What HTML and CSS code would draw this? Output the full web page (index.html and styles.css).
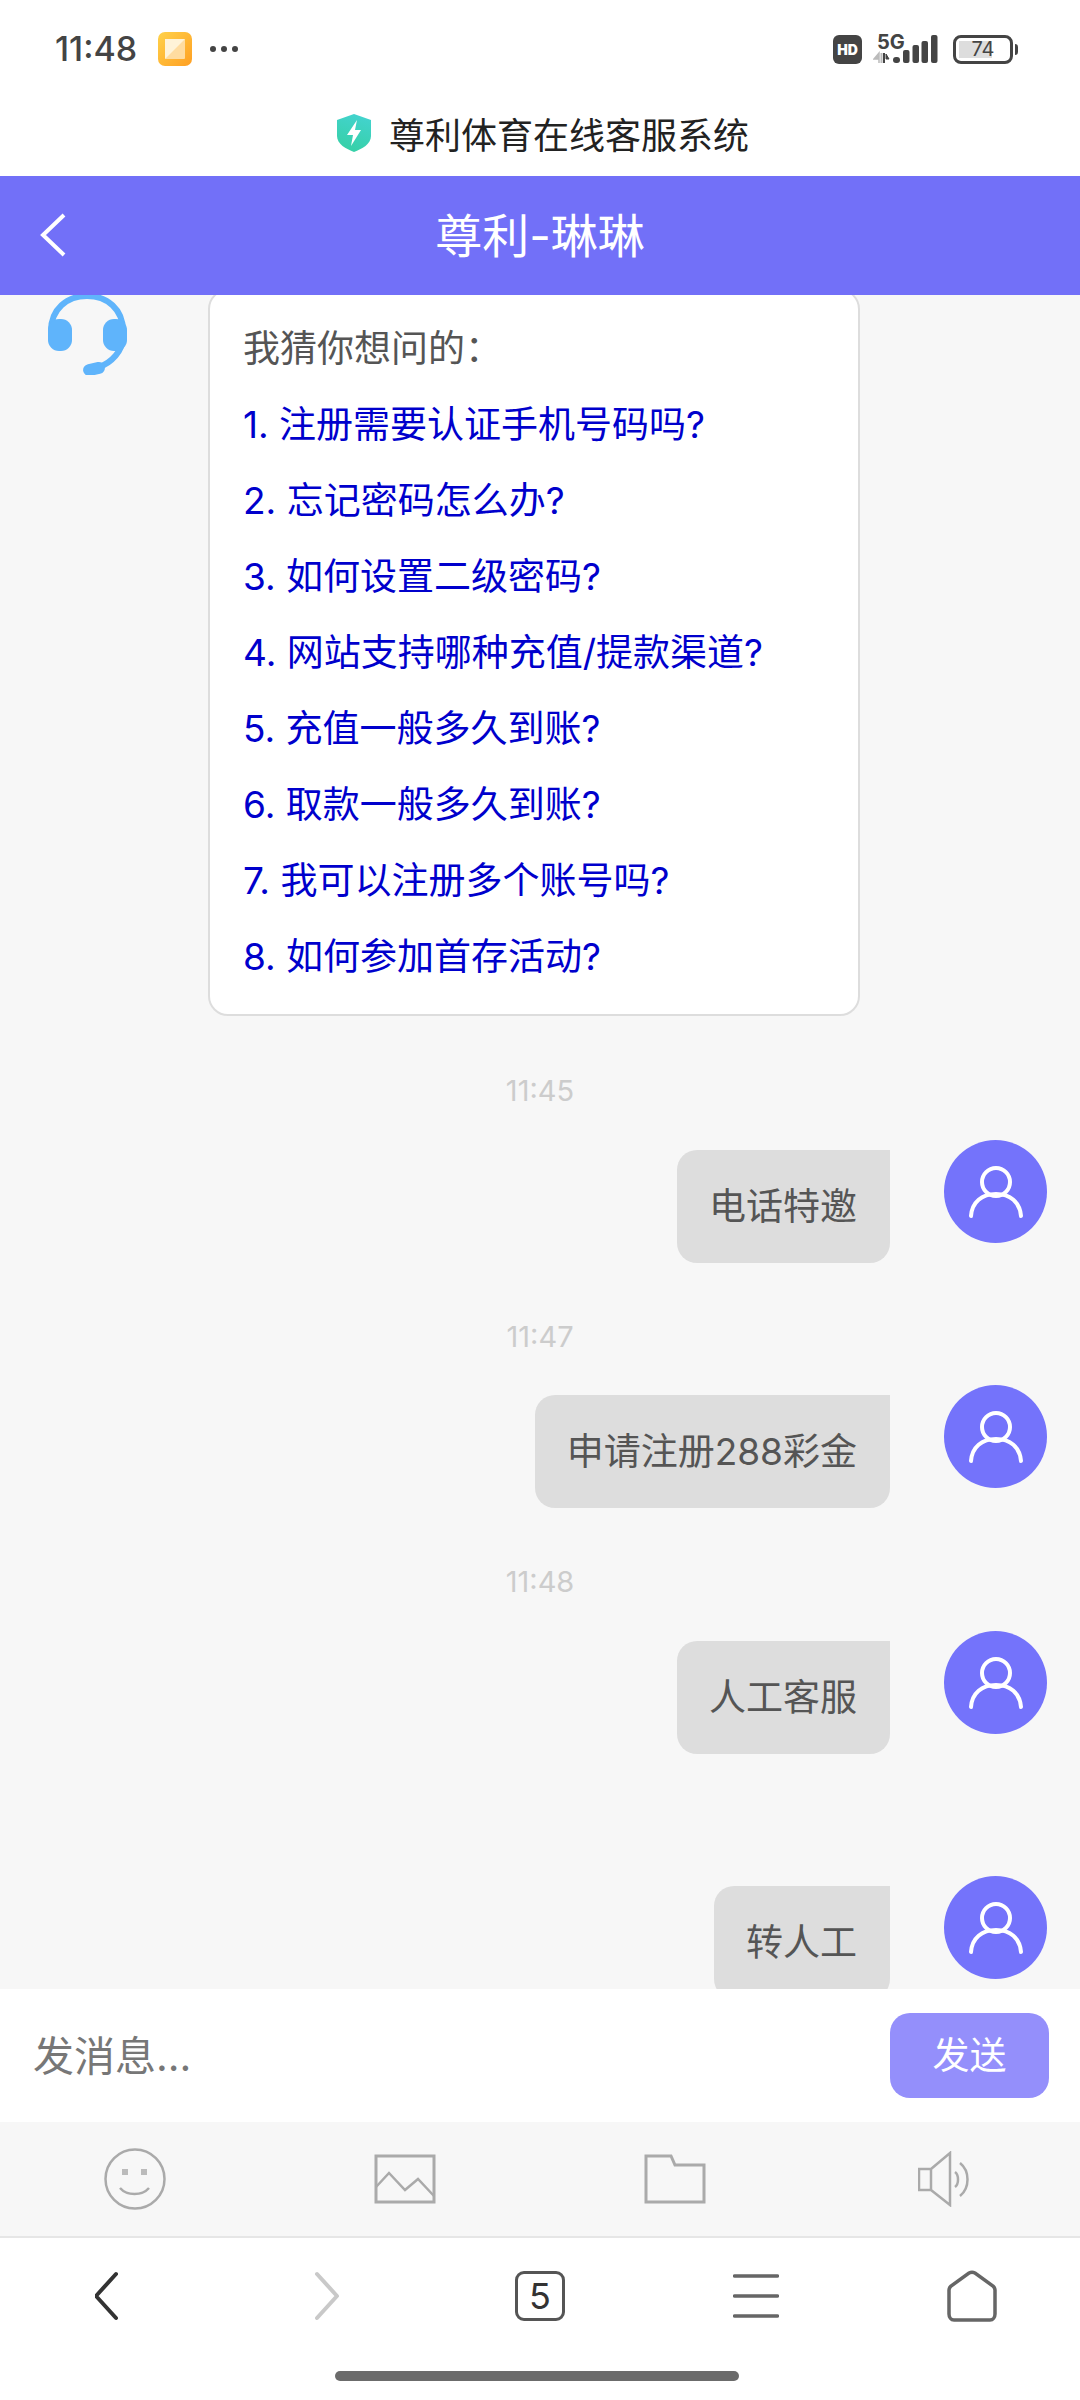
FILE: index.html
```html
<!DOCTYPE html>
<html lang="zh-CN">

<head>
    <meta charset="UTF-8">
    <meta name="viewport" content="width=device-width, initial-scale=1.0">
    <title>尊利体育在线客服系统</title>
    <link rel="stylesheet" href="styles.css">
</head>

<body>
    <div id="page">

        <!-- phone status bar -->
        <div class="status-bar">
            <span class="clock">11:48</span>
            <svg class="app-icon" width="34" height="34" viewBox="0 0 34 34">
                <defs>
                    <linearGradient id="appGrad" x1="0" y1="0" x2="1" y2="1">
                        <stop offset="0" stop-color="#ffd24a" />
                        <stop offset="1" stop-color="#ff9f22" />
                    </linearGradient>
                </defs>
                <rect width="34" height="34" rx="7" fill="url(#appGrad)" />
                <rect x="7" y="7" width="20" height="20" rx="1" fill="#ffdca0" />
                <path d="M7 27V7H27Z" fill="#fff3d8" />
            </svg>
            <span class="more-dots"><i></i><i></i><i></i></span>
            <span class="status-spacer"></span>
            <span class="hd-badge">HD</span>
            <div class="signal">
                <span class="signal-label">5G</span>
                <svg width="65" height="28" viewBox="0 0 65 28">
                    <path d="M6 28V18L1 24H6" fill="#bbb" stroke="#bbb" stroke-width="1.500" />
                    <path d="M8.500 18V28" fill="none" stroke="#bbb" stroke-width="2" />
                    <path d="M11 18V28" fill="none" stroke="#444" stroke-width="2" />
                    <path d="M13 19V24L16 24Z" fill="#444" stroke="#444" />
                    <rect x="20" y="22" width="7" height="6" rx="3" fill="#444" />
                    <rect x="30" y="15" width="6.500" height="13" rx="2" fill="#444" />
                    <rect x="39.500" y="10" width="6.500" height="18" rx="2" fill="#444" />
                    <rect x="48.500" y="6" width="6.500" height="22" rx="2" fill="#444" />
                    <rect x="58" y="0" width="6.500" height="28" rx="2" fill="#444" />
                </svg>
            </div>
            <div class="battery">
                <div class="battery-body">
                    <span class="battery-level"></span>
                    <span class="battery-text">74</span>
                </div>
                <span class="battery-nub"></span>
            </div>
        </div>

        <!-- browser page title -->
        <div class="page-title">
            <svg width="34" height="38" viewBox="0 0 34 38">
                <defs>
                    <linearGradient id="shieldGrad" x1="0.7" y1="0" x2="0.4" y2="1">
                        <stop offset="0" stop-color="#43d3cf" />
                        <stop offset="1" stop-color="#36d0a6" />
                    </linearGradient>
                </defs>
                <path d="M17 0L34 6V22C34 30 25 35 17 38C9 35 0 30 0 22V6Z" fill="url(#shieldGrad)" />
                <path d="M20 6L10 21H16L14 32L24 16H18Z" fill="#fff" />
            </svg>
            <span>尊利体育在线客服系统</span>
        </div>

        <!-- chat header -->
        <div class="chat-header">
            <svg class="header-back" width="28" height="46" viewBox="0 0 28 46">
                <path d="M25 3L4 23L25 43" fill="none" stroke="#fff" stroke-width="4" />
            </svg>
            <span>尊利-琳琳</span>
        </div>

        <!-- messages -->
        <div class="chat-list">
            <div class="service-row">
                <svg class="service-icon" width="80" height="80" viewBox="0 0 80 80">
                    <path d="M4 36C4 14 20 1 40 1C60 1 76 14 76 36V42C76 56 64 68 52 72" fill="none" stroke="#5fb4fb" stroke-width="6" />
                    <rect x="1" y="24" width="24" height="32" rx="11" fill="#5fb4fb" />
                    <rect x="56" y="24" width="24" height="32" rx="11" fill="#5fb4fb" />
                    <rect x="36" y="68" width="22" height="12" rx="6" transform="rotate(-12 47 74)" fill="#5fb4fb" />
                </svg>
                <div class="faq-card">
                    <div class="faq-title">我猜你想问的：</div>
                    <a class="faq-item">1. 注册需要认证手机号码吗?</a>
                    <a class="faq-item">2. 忘记密码怎么办?</a>
                    <a class="faq-item">3. 如何设置二级密码?</a>
                    <a class="faq-item">4. 网站支持哪种充值/提款渠道?</a>
                    <a class="faq-item">5. 充值一般多久到账?</a>
                    <a class="faq-item">6. 取款一般多久到账?</a>
                    <a class="faq-item">7. 我可以注册多个账号吗?</a>
                    <a class="faq-item">8. 如何参加首存活动?</a>
                </div>
            </div>

            <div class="msg-group">
                <div class="msg-time">11:45</div>
                <div class="msg-row">
                    <div class="msg-bubble">电话特邀</div>
                    <svg class="user-avatar" width="103" height="103" viewBox="0 0 103 103">
                        <circle cx="51.5" cy="51.5" r="51.5" fill="#7473fb" />
                        <circle cx="52" cy="42" r="14" fill="none" stroke="#fff" stroke-width="4" />
                        <path d="M27 76C28 62 38 54 52 54C66 54 76 62 77 76" fill="none" stroke="#fff" stroke-width="4" stroke-linecap="round" />
                    </svg>
                </div>
            </div>

            <div class="msg-group">
                <div class="msg-time">11:47</div>
                <div class="msg-row">
                    <div class="msg-bubble">申请注册288彩金</div>
                    <svg class="user-avatar" width="103" height="103" viewBox="0 0 103 103">
                        <circle cx="51.5" cy="51.5" r="51.5" fill="#7473fb" />
                        <circle cx="52" cy="42" r="14" fill="none" stroke="#fff" stroke-width="4" />
                        <path d="M27 76C28 62 38 54 52 54C66 54 76 62 77 76" fill="none" stroke="#fff" stroke-width="4" stroke-linecap="round" />
                    </svg>
                </div>
            </div>

            <div class="msg-group">
                <div class="msg-time">11:48</div>
                <div class="msg-row">
                    <div class="msg-bubble">人工客服</div>
                    <svg class="user-avatar" width="103" height="103" viewBox="0 0 103 103">
                        <circle cx="51.5" cy="51.5" r="51.5" fill="#7473fb" />
                        <circle cx="52" cy="42" r="14" fill="none" stroke="#fff" stroke-width="4" />
                        <path d="M27 76C28 62 38 54 52 54C66 54 76 62 77 76" fill="none" stroke="#fff" stroke-width="4" stroke-linecap="round" />
                    </svg>
                </div>
            </div>

            <div class="msg-group">
                <div class="msg-time"></div>
                <div class="msg-row">
                    <div class="msg-bubble">转人工</div>
                    <svg class="user-avatar" width="103" height="103" viewBox="0 0 103 103">
                        <circle cx="51.5" cy="51.5" r="51.5" fill="#7473fb" />
                        <circle cx="52" cy="42" r="14" fill="none" stroke="#fff" stroke-width="4" />
                        <path d="M27 76C28 62 38 54 52 54C66 54 76 62 77 76" fill="none" stroke="#fff" stroke-width="4" stroke-linecap="round" />
                    </svg>
                </div>
            </div>
        </div>

        <!-- input -->
        <div class="input-bar">
            <span class="input-hint">发消息...</span>
            <button class="send-btn">发送</button>
        </div>

        <!-- tools -->
        <div class="tool-bar">
            <svg width="62" height="62" viewBox="0 0 62 62">
                <circle cx="31" cy="31" r="29.5" fill="none" stroke="#aaa" stroke-width="2.500" />
                <rect x="18" y="21" width="6" height="6" fill="#bbb" />
                <rect x="37" y="21" width="6" height="6" fill="#bbb" />
                <path d="M16 40C23 48 38 48 45 40" fill="none" stroke="#aaa" stroke-width="2.500" />
            </svg>
            <svg width="62" height="50" viewBox="0 0 62 50">
                <rect x="2" y="2" width="58" height="46" fill="none" stroke="#aaa" stroke-width="3" />
                <path d="M2 33L15 19L31 36L44 25L60 42" fill="none" stroke="#aaa" stroke-width="2.500" />
            </svg>
            <svg width="62" height="50" viewBox="0 0 62 50">
                <path d="M2 2H27L31 11H60V48H2Z" fill="none" stroke="#aaa" stroke-width="3" />
            </svg>
            <svg width="54" height="56" viewBox="0 0 54 56">
                <path d="M1 18H13V39H1ZM13 18L32 2V54L13 39" fill="none" stroke="#aaa" stroke-width="2.500" />
                <path d="M37 21C41 24 41 33 37 36M42 12C52 20 52 37 42 45" fill="none" stroke="#aaa" stroke-width="2.500" />
            </svg>
        </div>

        <!-- browser nav -->
        <div class="browser-nav">
            <div class="nav-cell">
                <svg width="26" height="50" viewBox="0 0 26 50">
                    <path d="M21 3L1 25L21 47" fill="none" stroke="#333" stroke-width="4" stroke-linecap="round" stroke-linejoin="round" />
                </svg>
            </div>
            <div class="nav-cell">
                <svg class="nav-forward" width="26" height="50" viewBox="0 0 26 50">
                    <path d="M3 3L23 25L3 47" fill="none" stroke="#c9c9c9" stroke-width="4" stroke-linecap="round" stroke-linejoin="round" />
                </svg>
            </div>
            <div class="nav-cell">
                <span class="tab-count">5</span>
            </div>
            <div class="nav-cell">
                <svg width="46" height="44" viewBox="0 0 46 44">
                    <path d="M1.500 2H44.500M1.500 22H44.500M1.500 42H44.500" fill="none" stroke="#666" stroke-width="3.500" stroke-linecap="round" />
                </svg>
            </div>
            <div class="nav-cell">
                <svg width="50" height="52" viewBox="0 0 50 52">
                    <path d="M2 20C2 18 3 17 4 16L22 3C24 2 26 2 28 3L46 16C47 17 48 18 48 20V44C48 47 46 50 43 50H7C4 50 2 47 2 44Z" fill="none" stroke="#666" stroke-width="3.500" />
                </svg>
            </div>
        </div>

        <div class="home-bar">
            <span class="home-indicator"></span>
        </div>
    </div>
</body>

</html>
```

FILE: styles.css
```css
* {
    box-sizing: border-box;
}

html,
body {
    margin: 0;
    padding: 0;
}

body {
    font-family: Inter, "Noto Sans CJK SC", sans-serif;
    background-color: #fff;
}

#page {
    width: 1080px;
    height: 2400px;
    display: flex;
    flex-direction: column;
    overflow: hidden;
}

/* status bar */
.status-bar {
    height: 90px;
    flex-shrink: 0;
    display: flex;
    align-items: flex-start;
    padding: 32px 62px 0 55px;
    color: #444;
}

.clock {
    width: 83px;
    font-size: 34px;
    font-weight: 500;
    line-height: 34px;
    white-space: nowrap;
}

.app-icon {
    margin-left: 20px;
}

.more-dots {
    display: flex;
    gap: 5px;
    margin: 14px 0 0 18px;
}

.more-dots i {
    width: 6px;
    height: 6px;
    border-radius: 50%;
    background-color: #444;
}

.status-spacer {
    flex: 1;
}

.hd-badge {
    width: 29px;
    height: 29px;
    margin-top: 3px;
    border-radius: 6px;
    background-color: #444;
    color: #fff;
    font-size: 14px;
    font-weight: 900;
    line-height: 29px;
    text-align: center;
}

.signal {
    width: 65px;
    height: 32px;
    margin: 1px 0 0 11px;
    position: relative;
}

.signal-label {
    position: absolute;
    left: 4px;
    top: -1px;
    font-size: 20px;
    line-height: 20px;
    font-weight: 700;
}

.signal svg {
    position: absolute;
    left: 0;
    top: 2px;
}

.battery {
    display: flex;
    align-items: center;
    margin: 3px 0 0 15px;
}

.battery-body {
    width: 60px;
    height: 29px;
    border: 3px solid #444;
    border-radius: 8px;
    position: relative;
}

.battery-level {
    position: absolute;
    left: 3px;
    top: 3px;
    bottom: 3px;
    width: 33px;
    background-color: #ddd;
}

.battery-text {
    position: absolute;
    left: 0;
    right: 0;
    top: 0;
    text-align: center;
    font-size: 20px;
    line-height: 23px;
}

.battery-nub {
    width: 3px;
    height: 11px;
    margin-left: 2px;
    border-radius: 0 3px 3px 0;
    background-color: #444;
}

/* page title */
.page-title {
    height: 86px;
    flex-shrink: 0;
    display: flex;
    align-items: center;
    justify-content: center;
    gap: 18px;
    padding-left: 6px;
    font-size: 36px;
    color: #222;
}

/* chat header */
.chat-header {
    height: 119px;
    flex-shrink: 0;
    position: relative;
    display: flex;
    align-items: center;
    justify-content: center;
    padding-bottom: 6px;
    background-color: #7270f8;
    color: #fff;
    font-size: 47px;
}

.header-back {
    position: absolute;
    left: 39px;
    top: 36px;
}

/* chat list */
.chat-list {
    flex: 1;
    min-height: 0;
    overflow: hidden;
    background-color: #f7f7f7;
}

.service-row {
    display: flex;
    gap: 81px;
    padding-left: 47px;
    margin-top: -6px;
    margin-bottom: 55px;
}

.service-icon {
    flex-shrink: 0;
    margin-top: 6px;
}

.faq-card {
    width: 652px;
    padding: 20px 33px 19px;
    border: 2px solid #ddd;
    border-radius: 20px;
    background-color: #fff;
    font-size: 37px;
    line-height: 76px;
}

.faq-title {
    color: #555;
}

.faq-item {
    display: block;
    color: #0000cc;
}

.msg-group {
    margin-bottom: 54px;
}

.msg-time {
    height: 40px;
    margin-bottom: 28.5px;
    text-align: center;
    font-size: 29px;
    line-height: 40px;
    color: #ccc;
}

.msg-row {
    display: flex;
    justify-content: flex-end;
    align-items: flex-start;
    gap: 54px;
    padding-right: 33px;
}

.msg-bubble {
    height: 113px;
    margin-top: 10px;
    padding: 0 33px 0 32px;
    border-radius: 20px 0 20px 20px;
    background-color: #ddd;
    color: #555;
    font-size: 37px;
    line-height: 113px;
}

.user-avatar {
    flex-shrink: 0;
}

/* input */
.input-bar {
    height: 133px;
    flex-shrink: 0;
    display: flex;
    align-items: center;
    justify-content: space-between;
    padding: 0 31px 0 33px;
    border-radius: 10px;
    background-color: #fff;
    position: relative;
}

.input-hint {
    margin-bottom: 5px;
    font-size: 41px;
    color: #777;
}

.send-btn {
    width: 159px;
    height: 85px;
    padding: 0 0 5px;
    border: 0;
    border-radius: 20px;
    background-color: #948ffb;
    color: #fff;
    font-family: inherit;
    font-size: 37px;
}

/* tools */
.tool-bar {
    height: 116px;
    flex-shrink: 0;
    display: grid;
    grid-template-columns: repeat(4, 1fr);
    align-items: center;
    justify-items: center;
    border-bottom: 2px solid #e6e6e6;
    background-color: #f7f7f7;
}

/* browser nav */
.browser-nav {
    flex-shrink: 0;
    height: 124px;
    padding-bottom: 8px;
    display: grid;
    grid-template-columns: repeat(5, 1fr);
}

.nav-cell {
    display: flex;
    align-items: center;
    justify-content: center;
}

.nav-forward {
    margin-left: 6px;
}

.tab-count {
    width: 50px;
    height: 50px;
    border: 3px solid #555;
    border-radius: 9px;
    text-align: center;
    font-size: 36px;
    line-height: 44px;
    color: #333;
}

.home-bar {
    height: 38px;
    flex-shrink: 0;
    display: flex;
    justify-content: center;
    padding: 9px 6px 0 0;
}

.home-indicator {
    width: 404px;
    height: 10px;
    border-radius: 5px;
    background-color: #6b6b6b;
}
```
